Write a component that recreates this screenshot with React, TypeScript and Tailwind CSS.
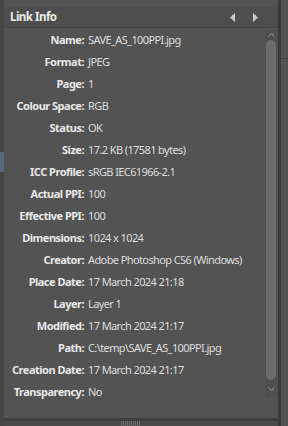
import React from 'react';

const rows: [string, string][] = [
    ['Name:', 'SAVE_AS_100PPI.jpg'],
    ['Format:', 'JPEG'],
    ['Page:', '1'],
    ['Colour Space:', 'RGB'],
    ['Status:', 'OK'],
    ['Size:', '17.2 KB (17581 bytes)'],
    ['ICC Profile:', 'sRGB IEC61966-2.1'],
    ['Actual PPI:', '100'],
    ['Effective PPI:', '100'],
    ['Dimensions:', '1024 x 1024'],
    ['Creator:', 'Adobe Photoshop CS6 (Windows)'],
    ['Place Date:', '17 March 2024 21:18'],
    ['Layer:', 'Layer 1'],
    ['Modified:', '17 March 2024 21:17'],
    ['Path:', 'C:\\temp\\SAVE_AS_100PPI.jpg'],
    ['Creation Date:', '17 March 2024 21:17'],
    ['Transparency:', 'No'],
];

export default function App() {
    return (
        <div className="flex w-[288px] h-[426px] bg-[#535353] overflow-hidden text-[11px] text-[#e6e6e6]" style={{ fontFamily: '"Noto Sans", "Open Sans", sans-serif' }}>
            {/* underlying panel on the left */}
            <div className="w-[4px] flex flex-col bg-[#464646]">
                <div className="h-[152px]" />
                <div className="h-[20px] bg-[#5a6a7e]" />
            </div>

            <div className="flex-1 flex flex-col">
                <div className="h-[7px] bg-[#535353]" />
                <div className="h-[21px] flex items-center justify-between pl-[6px] pr-[20px] bg-[#4e4e4e] border-b border-[#464646]">
                    <span className="font-bold text-[11.5px] tracking-[-0.5px] text-[#ececec]">Link Info</span>
                    <div className="flex items-center gap-[16px]">
                        <svg width="6" height="9" viewBox="0 0 6 9"><path d="M5 0 L0 4.5 L5 9 Z" fill="#c8c8c8" /></svg>
                        <svg width="6" height="9" viewBox="0 0 6 9"><path d="M1 0 L6 4.5 L1 9 Z" fill="#c8c8c8" /></svg>
                    </div>
                </div>

                <div className="flex-1 flex">
                    <div className="flex-1 flex flex-col pt-[1px]">
                        {rows.map(([label, value]) => (
                            <div key={label} className="flex h-[22px] items-center">
                                <span className="w-[80px] text-right font-bold tracking-[-0.5px] text-[#e8e8e8]">{label}</span>
                                <span className="pl-[4px] whitespace-nowrap tracking-[-0.6px] text-[#dedede]">{value}</span>
                            </div>
                        ))}
                    </div>

                    {/* scrollbar */}
                    <div className="w-[12px] flex flex-col items-center mr-[1px] mt-[2px] mb-[20px] bg-[#4f4f4f]">
                        <div className="h-[10px] flex items-center justify-center">
                            <svg width="7" height="4" viewBox="0 0 7 4"><path d="M0.5 3.5 L3.5 0.5 L6.5 3.5" stroke="#9a9a9a" fill="none" /></svg>
                        </div>
                        <div className="flex-1 w-[10px] rounded-full bg-[#6b6b6b]" />
                        <div className="h-[18px] flex items-center justify-center">
                            <svg width="7" height="4" viewBox="0 0 7 4"><path d="M0.5 0.5 L3.5 3.5 L6.5 0.5" stroke="#9a9a9a" fill="none" /></svg>
                        </div>
                    </div>
                </div>

                <div className="h-[3px] bg-[#3d3d3d]" />
                <div className="h-[5px] flex justify-end pr-[138px] bg-[#4a4a4a]">
                    <div className="flex gap-[1px]">
                        {[0, 1, 2, 3, 4, 5, 6, 7, 8, 9].map(i => (
                            <div key={i} className="w-[1px] h-full bg-[#6a6a6a]" />
                        ))}
                    </div>
                </div>
            </div>

            <div className="w-[3px] bg-[#3a3a3a]" />
            <div className="w-[7px] flex flex-col bg-[#535353]">
                <div className="h-[58px]" />
                <div className="h-[1px] bg-[#3e3e3e]" />
            </div>
        </div>
    );
}
